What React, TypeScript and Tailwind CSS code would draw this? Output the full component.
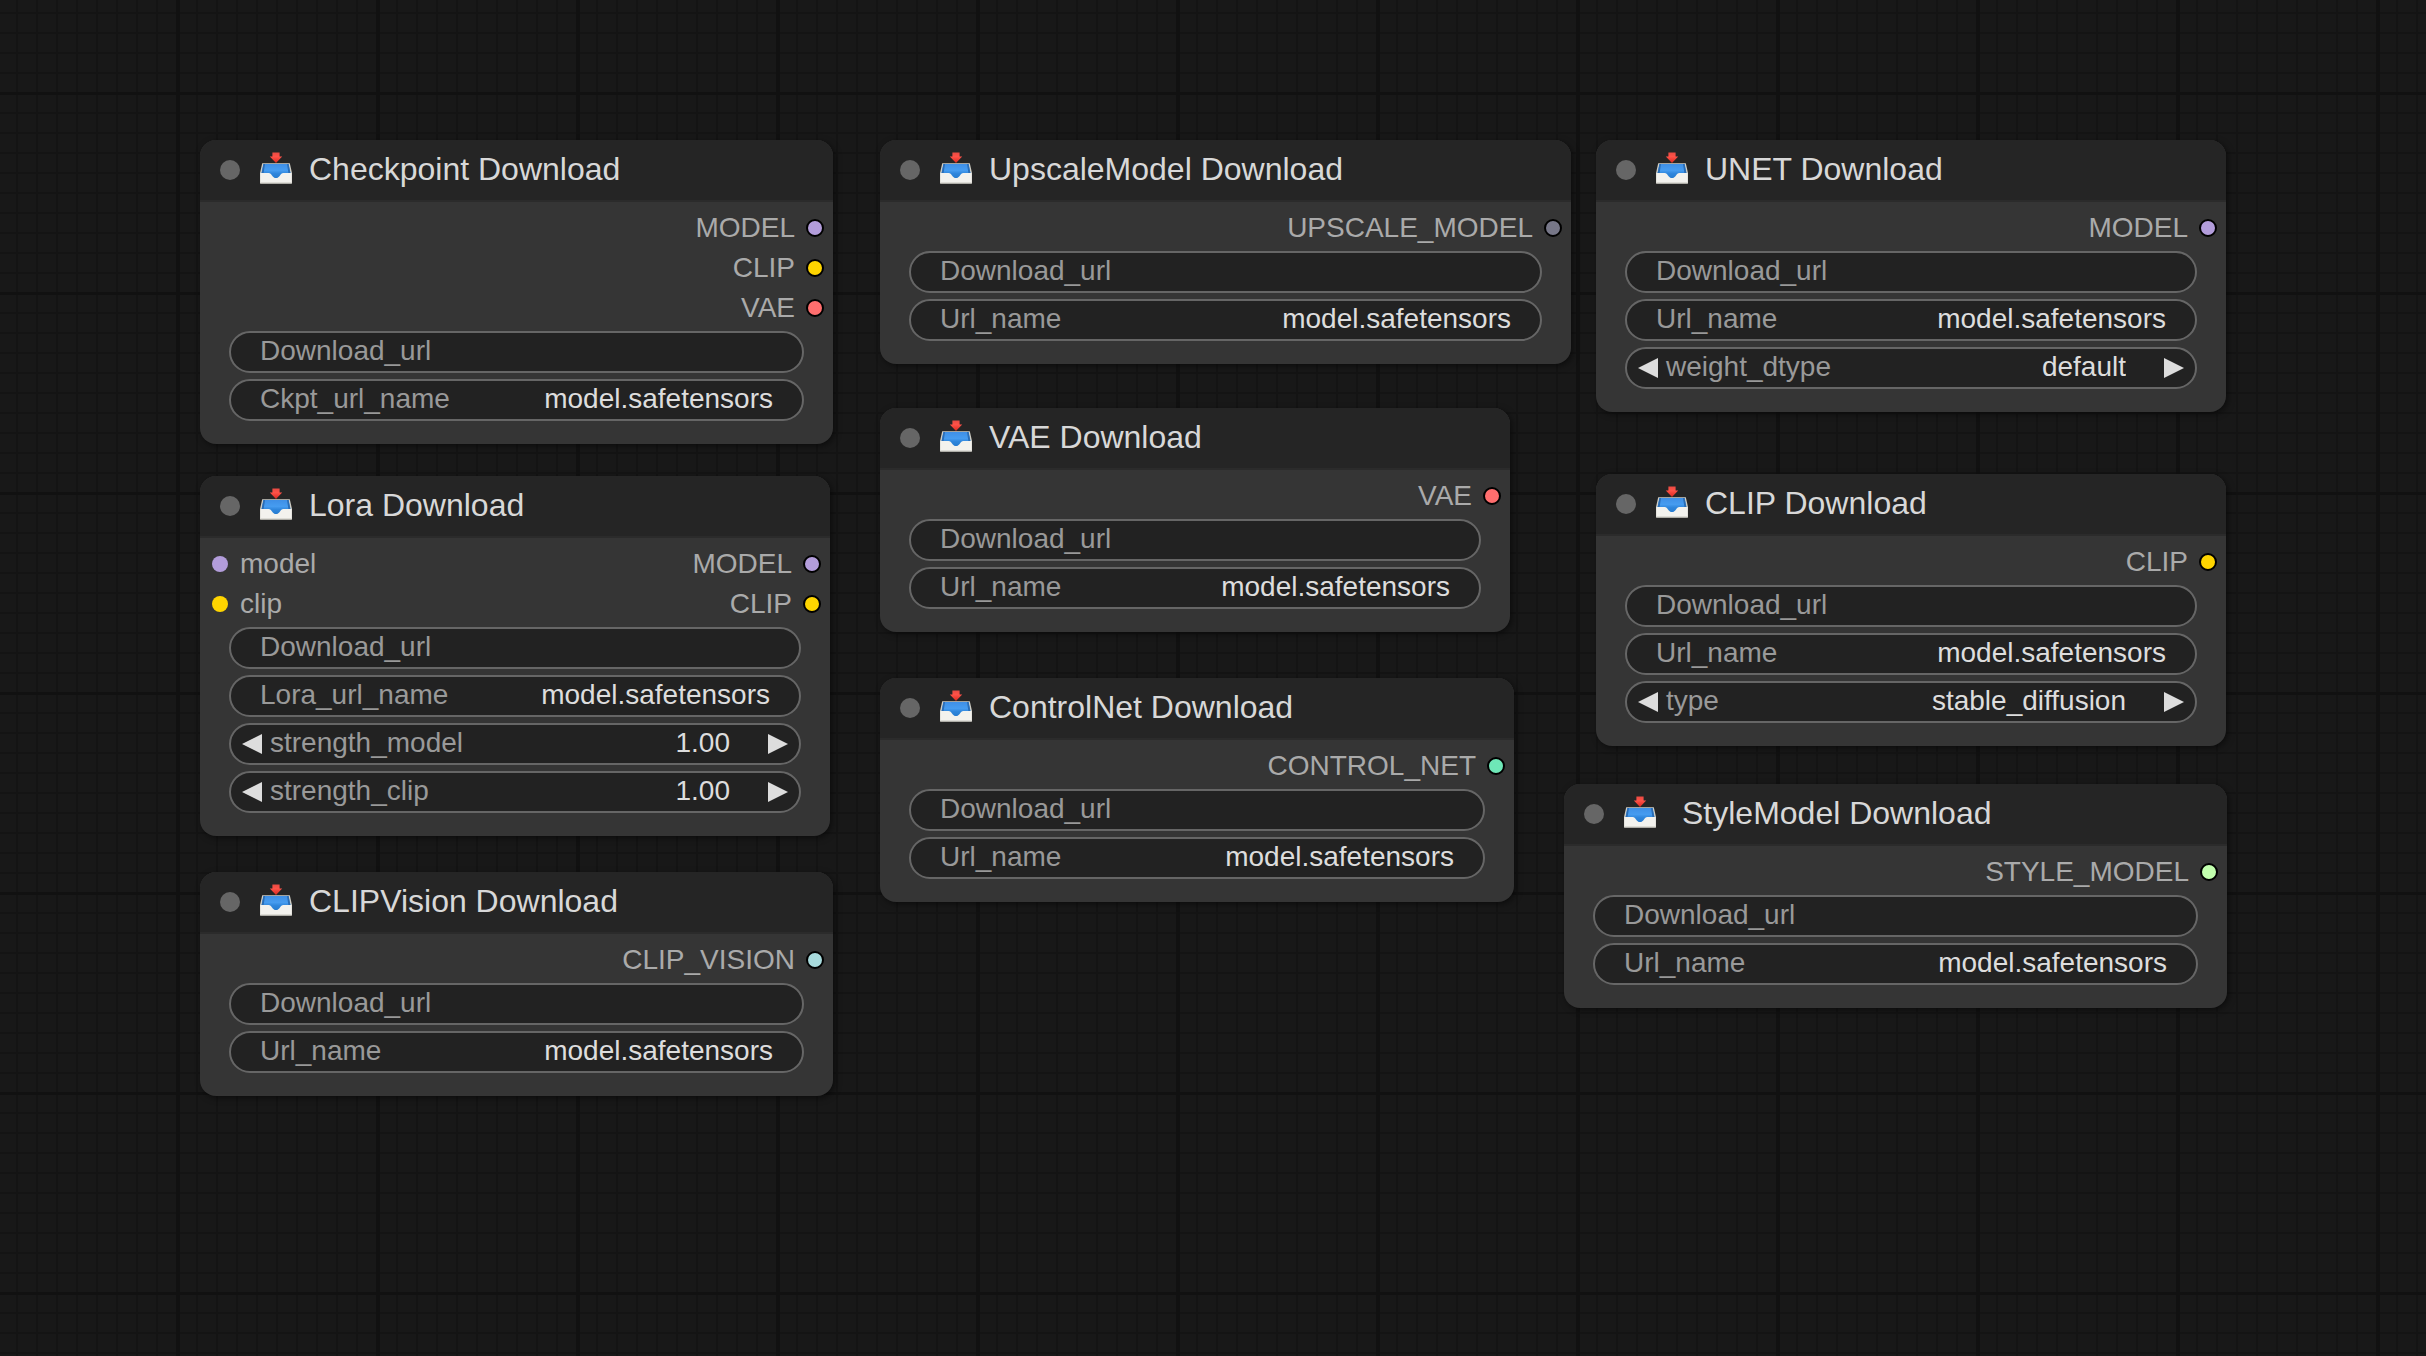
import React from "react";

type Port = { name: string; dot: string };
type Widget = { kind: "text" | "number" | "combo"; name: string; value: string };
type NodeData = {
  title: string;
  place: string;
  wideGap?: boolean;
  inputs?: Port[];
  outputs: Port[];
  widgets: Widget[];
};

const MODEL = "bg-[#b39ddb]";
const CLIP = "bg-[#ffd500]";
const VAE = "bg-[#ff6e6e]";

const url: Widget = { kind: "text", name: "Download_url", value: "" };
const named = (name: string): Widget => ({ kind: "text", name, value: "model.safetensors" });

const nodes: NodeData[] = [
  {
    title: "Checkpoint Download",
    place: "left-[200px] top-[140px] w-[633px]",
    outputs: [
      { name: "MODEL", dot: MODEL },
      { name: "CLIP", dot: CLIP },
      { name: "VAE", dot: VAE },
    ],
    widgets: [url, named("Ckpt_url_name")],
  },
  {
    title: "Lora Download",
    place: "left-[200px] top-[476px] w-[630px]",
    inputs: [
      { name: "model", dot: MODEL },
      { name: "clip", dot: CLIP },
    ],
    outputs: [
      { name: "MODEL", dot: MODEL },
      { name: "CLIP", dot: CLIP },
    ],
    widgets: [
      url,
      named("Lora_url_name"),
      { kind: "number", name: "strength_model", value: "1.00" },
      { kind: "number", name: "strength_clip", value: "1.00" },
    ],
  },
  {
    title: "CLIPVision Download",
    place: "left-[200px] top-[872px] w-[633px]",
    outputs: [{ name: "CLIP_VISION", dot: "bg-[#a8dadc]" }],
    widgets: [url, named("Url_name")],
  },
  {
    title: "UpscaleModel Download",
    place: "left-[880px] top-[140px] w-[691px]",
    outputs: [{ name: "UPSCALE_MODEL", dot: "bg-[#778]" }],
    widgets: [url, named("Url_name")],
  },
  {
    title: "VAE Download",
    place: "left-[880px] top-[408px] w-[630px]",
    outputs: [{ name: "VAE", dot: VAE }],
    widgets: [url, named("Url_name")],
  },
  {
    title: "ControlNet Download",
    place: "left-[880px] top-[678px] w-[634px]",
    outputs: [{ name: "CONTROL_NET", dot: "bg-[#6ee7b7]" }],
    widgets: [url, named("Url_name")],
  },
  {
    title: "UNET Download",
    place: "left-[1596px] top-[140px] w-[630px]",
    outputs: [{ name: "MODEL", dot: MODEL }],
    widgets: [url, named("Url_name"), { kind: "combo", name: "weight_dtype", value: "default" }],
  },
  {
    title: "CLIP Download",
    place: "left-[1596px] top-[474px] w-[630px]",
    outputs: [{ name: "CLIP", dot: CLIP }],
    widgets: [url, named("Url_name"), { kind: "combo", name: "type", value: "stable_diffusion" }],
  },
  {
    title: "StyleModel Download",
    place: "left-[1564px] top-[784px] w-[663px]",
    wideGap: true,
    outputs: [{ name: "STYLE_MODEL", dot: "bg-[#c2ffae]" }],
    widgets: [url, named("Url_name")],
  },
];

function InboxIcon() {
  return (
    <svg viewBox="0 0 32 32" className="size-8 shrink-0" aria-hidden="true">
      <defs>
        <linearGradient id="tray-blue" x1="0" y1="0" x2="0" y2="1">
          <stop offset="0" stopColor="#3f8fe6" />
          <stop offset="0.4" stopColor="#469cf0" />
          <stop offset="0.6" stopColor="#2f86dc" />
          <stop offset="1" stopColor="#2378cc" />
        </linearGradient>
        <linearGradient id="arrow-red" x1="0" y1="0" x2="0" y2="1">
          <stop offset="0" stopColor="#e84a42" />
          <stop offset="0.4" stopColor="#ff5248" />
          <stop offset="1" stopColor="#d8281f" />
        </linearGradient>
      </defs>
      <path d="M2.2 11.2H29.8L32 21V31.6H0V21Z" fill="#cfcec6" />
      <path d="M3.4 12H28.6L30.4 21V28H1.6V21Z" fill="url(#tray-blue)" />
      <path d="M3.4 12L5 12L3.6 21H1.6Z" fill="#2a6cb4" />
      <path d="M28.6 12L27 12L28.4 21H30.4Z" fill="#2a6cb4" />
      <path
        d="M0.4 21H8.6C10.4 21 11 22 12 23.4C13 24.9 14.2 26 16 26S19 24.9 20 23.4C21 22 21.6 21 23.4 21H31.6V31.2H0.4Z"
        fill="#f3f2ee"
      />
      <path d="M0.4 30.4H31.6V31.4H0.4Z" fill="#cfcec6" />
      <path d="M12.4 0.4H19.6V4.4H22.2L16 11L9.8 4.4H12.4Z" fill="url(#arrow-red)" />
    </svg>
  );
}

function Arrow({ side, label }: { side: "left" | "right"; label: string }) {
  return (
    <button type="button" aria-label={label} className="shrink-0">
      <svg viewBox="0 0 20 20" className="block size-5" fill="#dddddd" aria-hidden="true">
        <path d={side === "left" ? "M20 0V20L0 10Z" : "M0 0V20L20 10Z"} />
      </svg>
    </button>
  );
}

const field =
  "min-w-0 flex-1 appearance-none bg-transparent text-right text-[28px] leading-8 text-[#dddddd] outline-none";

function WidgetRow({ widget, id }: { widget: Widget; id: string }) {
  const stepped = widget.kind !== "text";
  const pad = stepped ? "px-[11px]" : "px-[29px]";
  return (
    <div
      className={`-mx-px flex h-[42px] items-center rounded-full border-2 border-[#666666] bg-[#222222] ${pad}`}
    >
      {stepped && <Arrow side="left" label={`Previous ${widget.name}`} />}
      <label htmlFor={id} className={`pb-0.5 leading-8 text-[#999999] ${stepped ? "ml-2" : ""}`}>
        {widget.name}
      </label>
      <div className="flex min-w-0 flex-1 pb-0.5">
        {widget.kind === "combo" ? (
          <select id={id} defaultValue={widget.value} className={`${field} [text-align-last:right]`}>
            <option>{widget.value}</option>
          </select>
        ) : (
          <input id={id} type="text" defaultValue={widget.value} className={field} />
        )}
      </div>
      {stepped && (
        <div className="ml-[38px] flex">
          <Arrow side="right" label={`Next ${widget.name}`} />
        </div>
      )}
    </div>
  );
}

function GraphNode({ node }: { node: NodeData }) {
  const slug = node.title.replace(/\s+/g, "-").toLowerCase();
  return (
    <section
      className={`absolute rounded-2xl bg-[#353535] shadow-[2px_2px_6px_rgba(0,0,0,0.5)] ${node.place}`}
    >
      <header className="flex h-[62px] items-center rounded-t-2xl border-b-2 border-[#2b2b2b] bg-[#252525] pl-5">
        <span className="size-5 shrink-0 rounded-full bg-[#666666]" />
        <span className="ml-5 pb-1">
          <InboxIcon />
        </span>
        <h2
          className={`pb-0.5 text-[32px] leading-9 whitespace-nowrap text-[#d8d8d8] ${node.wideGap ? "ml-[26px]" : "ml-[17px]"}`}
        >
          {node.title}
        </h2>
      </header>
      <div className="flex justify-between pt-[6px] pr-[9px] pl-3 leading-10 text-[#aaaaaa]">
        <ul>
          {node.inputs?.map((port) => (
            <li key={port.name} className="flex h-10 items-center gap-3">
              <span className={`size-4 rounded-full ${port.dot}`} />
              {port.name}
            </li>
          ))}
        </ul>
        <ul>
          {node.outputs.map((port) => (
            <li key={port.name} className="flex h-10 items-center justify-end gap-[11px]">
              {port.name}
              <span className={`size-[18px] rounded-full border-2 border-black ${port.dot}`} />
            </li>
          ))}
        </ul>
      </div>
      <div className="flex flex-col gap-[6px] px-[30px] pt-[3px] pb-[23px]">
        {node.widgets.map((widget) => (
          <WidgetRow key={widget.name} widget={widget} id={`${slug}-${widget.name}`} />
        ))}
      </div>
    </section>
  );
}

const grid = [
  "bg-[#181818]",
  "bg-[linear-gradient(to_right,#111111_4px,transparent_4px),linear-gradient(to_bottom,#111111_3px,transparent_3px),linear-gradient(to_right,#141414_2px,transparent_2px),linear-gradient(to_bottom,#141414_2px,transparent_2px)]",
  "bg-size-[200px_200px,200px_200px,20px_20px,20px_20px]",
  "bg-position-[176px_92px,176px_92px,16px_12px,16px_12px]",
].join(" ");

export default function App() {
  return (
    <main
      className={`relative min-h-screen overflow-hidden font-['Liberation_Sans',Arial,sans-serif] text-[28px] ${grid}`}
    >
      {nodes.map((node) => (
        <GraphNode key={node.title} node={node} />
      ))}
    </main>
  );
}
